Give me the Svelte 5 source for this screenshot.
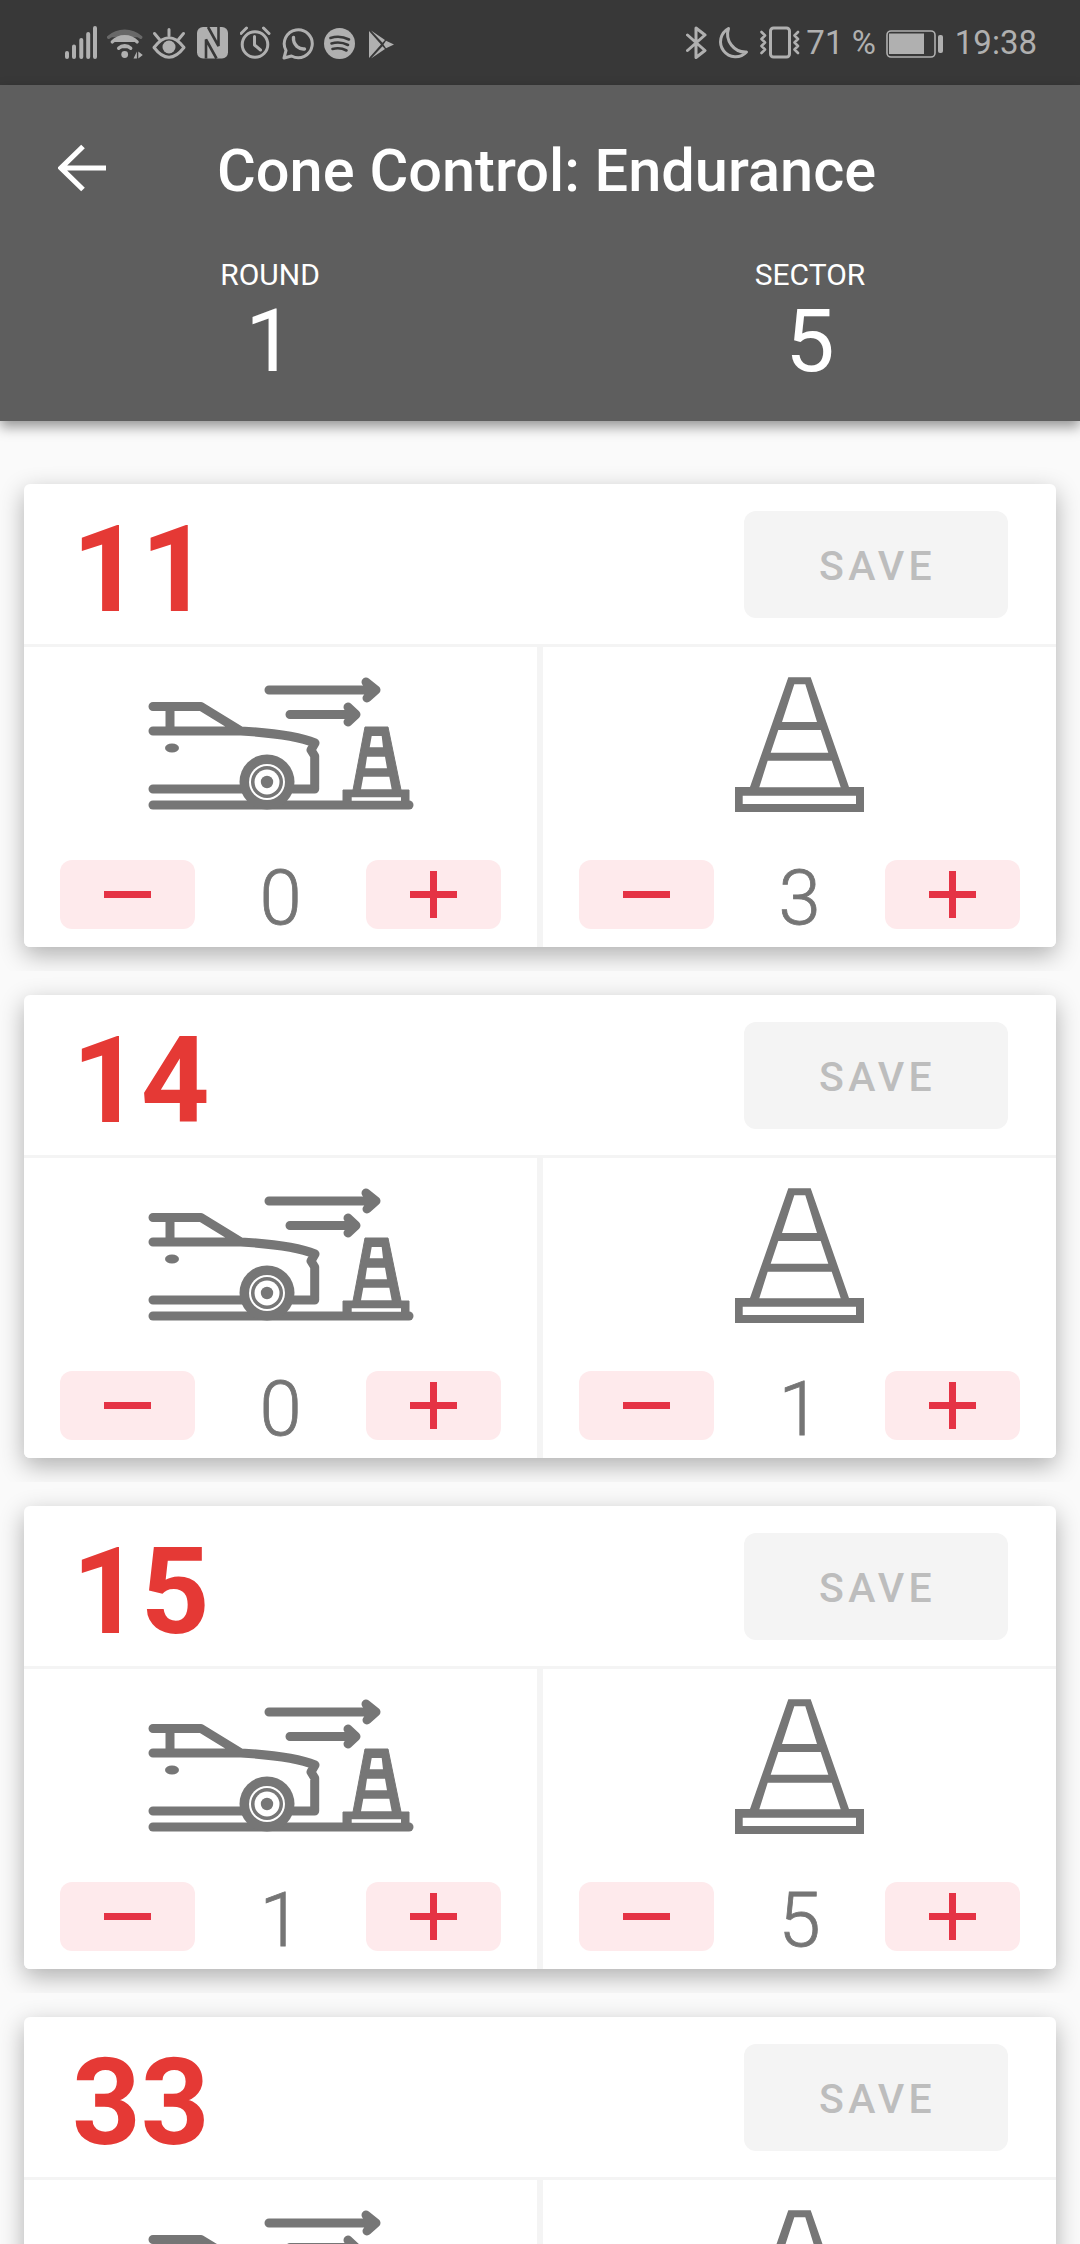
<script>
  const cards = [
    { n: '11', a: 0, b: 3 },
    { n: '14', a: 0, b: 1 },
    { n: '15', a: 1, b: 5 },
    { n: '33', a: null, b: null }
  ];
</script>

{#snippet stepper(value)}
  <div class="stepper">
    <button class="step" aria-label="Decrease">
      <svg width="47" height="7" viewBox="0 0 47 7"><rect width="47" height="7" /></svg>
    </button>
    <span class="value">{value}</span>
    <button class="step" aria-label="Increase">
      <svg width="47" height="47" viewBox="0 0 47 47"><path d="M0 20h20V0h7v20h20v7H27v20h-7V27H0z" /></svg>
    </button>
  </div>
{/snippet}

<div class="app">
  <div class="status">
    <div class="group">
      <svg width="42" height="34" viewBox="0 0 42 34" class="si">
        <path class="ln" stroke-width="4" d="M2 31V27M9 31V20.5M16.3 31V14M23.2 31V8M30 31V2" />
      </svg>
      <svg width="45" height="34" viewBox="0 0 45 34" class="si">
        <path class="ln" stroke-width="3.4" d="M11.7 22.3A8.5 8.5 0 0 1 23.7 22.3M5.3 15.9A17.5 17.5 0 0 1 30.1 15.9" />
        <path class="ln" stroke-width="3.4" opacity=".4" d="M1.7 11.3A24 24 0 0 1 33.7 11.3" />
        <circle cx="17.7" cy="28.5" r="3.4" />
        <path d="M26.5 32.5h3.4v-7zM31.3 25.5v7l4.5-3.5z" />
      </svg>
      <svg width="45" height="34" viewBox="0 0 45 34" class="si">
        <path class="ln" stroke-width="3" fill="none" d="M2 21.5Q17 2 32 21.5Q17 41 2 21.5Z" />
        <circle cx="17" cy="21" r="6.5" />
        <path class="ln" stroke-width="3" d="M17 3.5V9.5M2.5 7.5L7.5 13.5M31.5 7.5L26.5 13.5" />
      </svg>
      <svg width="43" height="34" viewBox="0 0 43 34" class="si">
        <rect x="0" y="1" width="31" height="31.5" rx="6" />
        <path d="M9 32.5V13.5L19.5 32.5M21.5 1V20L11 1" fill="none" stroke="#383838" stroke-width="2.6" />
      </svg>
      <svg width="42" height="34" viewBox="0 0 42 34" class="si">
        <circle cx="15" cy="18.5" r="12.8" fill="none" class="ln" stroke-width="3" />
        <path class="ln" stroke-width="3" fill="none" d="M14.5 10.5V19L20.5 24M1 7.5L6.5 2M29 7.5L23.5 2" />
      </svg>
      <svg width="42" height="34" viewBox="0 0 42 34" class="si">
        <path class="ln" stroke-width="3" fill="none" d="M2 32L4 24.5A14 14 0 1 1 9.5 30Z" />
        <path class="ln" stroke-width="3.4" fill="none" d="M11.5 11.5Q11 16.5 15 20.5Q18.5 23.5 22.5 23" />
      </svg>
      <svg width="44" height="34" viewBox="0 0 44 34" class="si">
        <circle cx="15.5" cy="17.5" r="15.5" />
        <path fill="none" stroke="#383838" stroke-linecap="round" stroke-width="2.6" d="M6.5 12Q16 9 25 13.5M7.5 17.5Q16 15 24 19M8.5 23Q16 21 22.5 24.5" />
      </svg>
      <svg width="26" height="34" viewBox="0 0 26 34" class="si">
        <path d="M1 5L13 18.5L1 32ZM3 4.5L17 14L14.5 16.8ZM3 32.5L14.5 20.2L17 23ZM18 14.8L26 18.5L18 22.2L15.5 18.5Z" />
      </svg>
    </div>
    <div class="group">
      <svg width="31" height="34" viewBox="0 0 31 34" class="si">
        <path class="ln" stroke-width="3" fill="none" stroke-linejoin="miter" d="M1.5 9L19 24.5L10 31.5V2L19 9L1.5 24.5" />
      </svg>
      <svg width="43" height="34" viewBox="0 0 43 34" class="si">
        <path class="ln" stroke-width="3" fill="none" d="M11.5 2.5A15 15 0 1 0 29.5 26A18 18 0 0 1 11.5 2.5Z" />
      </svg>
      <svg width="46" height="34" viewBox="0 0 46 34" class="si">
        <rect x="10.5" y="2" width="19" height="29" rx="3" fill="none" class="ln" stroke-width="3" />
        <path class="ln" stroke-width="2.6" fill="none" d="M1.5 6L5 9.5L1.5 13L5 16.5L1.5 20L5 23.5L1.5 27M38 6L34.5 9.5L38 13L34.5 16.5L38 20L34.5 23.5L38 27" />
      </svg>
      <span class="stxt pct">71 %</span>
      <svg width="57" height="34" viewBox="0 0 57 34" class="si batt">
        <rect x="1" y="5" width="48" height="26" rx="4" fill="none" class="ln" stroke-width="1.6" />
        <rect x="3" y="7.5" width="35" height="20.5" />
        <rect x="52" y="9" width="5" height="18" rx="2" />
      </svg>
      <span class="stxt">19:38</span>
    </div>
  </div>

  <header class="bar">
    <div class="title-row">
      <svg class="back" width="48" height="48" viewBox="0 0 48 48">
        <path d="M48 24H3M25 2.5L3 24L25 45.5" fill="none" stroke="#fff" stroke-width="5.2" />
      </svg>
      <h1>Cone Control: Endurance</h1>
    </div>
    <div class="meta">
      <div class="meta-col"><span class="label">ROUND</span><span class="big">1</span></div>
      <div class="meta-col"><span class="label">SECTOR</span><span class="big">5</span></div>
    </div>
  </header>

  <main class="list">
    {#each cards as c}
      <div class="item">
        <section class="card">
          <div class="card-head">
            <span class="num">{c.n}</span>
            <button class="save">SAVE</button>
          </div>
          <div class="card-body">
            <div class="cell">
              <svg class="pic" width="320" height="170" viewBox="0 0 320 170">
                <g fill="none" stroke="#767676" stroke-width="9" stroke-linecap="round" stroke-linejoin="round">
                  <path d="M148 30H254M245 22L255 30L246 38" />
                  <path d="M169 54.5H234M227 47L235 54.5L227 62" />
                  <path d="M32 46.5H80L120 71M49 46.5V71M32 71H120Q172 74 194 83L190 90L193.7 96V129H172M32 129H122" />
                  <path d="M32 145H288" />
                </g>
                <ellipse cx="51" cy="88" rx="7" ry="4.6" fill="#767676" />
                <circle cx="146" cy="122" r="27.5" fill="#767676" />
                <circle cx="146" cy="122" r="18" fill="#fff" />
                <circle cx="146" cy="122" r="16" fill="#767676" />
                <circle cx="146" cy="122" r="12.5" fill="#fff" />
                <circle cx="146" cy="122" r="6.2" fill="#767676" />
                <path d="M244 67H267L280 130H288V142H222V130H232Z" fill="#767676" stroke="#767676" stroke-width="1" stroke-linejoin="round" />
                <path d="M250.7 76H260.7L262 87.3H248.7ZM246 96.7H264L266 108.3H244.3ZM242.3 116.7H268.3L270.7 129.3H240ZM230.7 137.3H280V140.7H230.7Z" fill="#fff" />
              </svg>
              {#if c.a !== null}{@render stepper(c.a)}{/if}
            </div>
            <div class="cell">
              <svg class="pic" width="200" height="170" viewBox="0 0 200 170">
                <path d="M88.3 17.3H110.7L149 127H164V152H35V127H50ZM94.3 24.3L82 62H117L105.3 24.3ZM78.3 70L70.7 92.7H128.3L120.7 70ZM67.7 100.7L59.3 127.3H140.7L131.7 100.7ZM42.7 135.7V144H156V135.7Z" fill="#767676" fill-rule="evenodd" />
              </svg>
              {#if c.b !== null}{@render stepper(c.b)}{/if}
            </div>
          </div>
        </section>
      </div>
    {/each}
  </main>
</div>

<style>
  :global(body) {
    margin: 0;
    background: #fafafa;
  }
  .app {
    width: 1080px;
    height: 2244px;
    overflow: hidden;
    background: #fafafa;
    font-family: Roboto, "Liberation Sans", sans-serif;
    position: relative;
  }
  .status {
    height: 85px;
    background: #383838;
    display: flex;
    align-items: center;
    justify-content: space-between;
    padding: 0 43px 0 65px;
    box-sizing: border-box;
  }
  .group {
    display: flex;
    align-items: center;
  }
  .si {
    display: block;
    fill: #b0b0b0;
    flex: none;
  }
  .ln {
    stroke: #b0b0b0;
    stroke-linecap: round;
    stroke-linejoin: round;
  }
  .stxt {
    font-size: 33px;
    color: #b0b0b0;
    font-weight: 400;
    line-height: 34px;
    white-space: nowrap;
  }
  .batt {
    margin: 0 12px 0 10px;
  }
  .bar {
    height: 336px;
    background: #5e5e5e;
    color: #fff;
    box-shadow: 0 6px 12px rgba(0, 0, 0, 0.4);
    position: relative;
    z-index: 1;
  }
  .title-row {
    display: flex;
    align-items: center;
    height: 170px;
    padding-left: 58px;
    box-sizing: border-box;
  }
  .back {
    flex: none;
    display: block;
    margin-bottom: 4px;
  }
  h1 {
    margin: 0 0 0 111px;
    padding-top: 2px;
    font-size: 59.5px;
    font-weight: 500;
    line-height: 70px;
    white-space: nowrap;
  }
  .meta {
    display: grid;
    grid-template-columns: 1fr 1fr;
  }
  .meta-col {
    display: flex;
    flex-direction: column;
    align-items: center;
  }
  .label {
    font-size: 30px;
    line-height: 40px;
  }
  .big {
    font-size: 88px;
    line-height: 92px;
    font-weight: 400;
  }
  .list {
    padding-top: 39px;
  }
  .item {
    padding: 24px;
    overflow: hidden;
  }
  .card {
    background: #fff;
    border-radius: 6px;
    height: 463px;
    box-shadow: 0 8px 24px rgba(0, 0, 0, 0.3);
    display: flex;
    flex-direction: column;
    box-sizing: border-box;
  }
  .card-head {
    height: 163px;
    flex: none;
    box-sizing: border-box;
    border-bottom: 3px solid #f4f4f4;
    display: flex;
    align-items: center;
    justify-content: space-between;
    padding: 0 48px;
  }
  .num {
    font-size: 120px;
    font-weight: 700;
    color: #e53935;
    line-height: 140px;
    padding-top: 11px;
  }
  .save {
    width: 264px;
    height: 107px;
    border: 0;
    border-radius: 12px;
    background: #f4f4f4;
    color: #bdbdbd;
    font: 500 41px Roboto, sans-serif;
    letter-spacing: 4.2px;
    padding: 3px 0 0 3px;
  }
  .card-body {
    flex: 1;
    display: grid;
    grid-template-columns: 513px 513px;
    gap: 6px;
    background: #f4f4f4;
    border-radius: 0 0 6px 6px;
    overflow: hidden;
  }
  .cell {
    background: #fff;
    display: flex;
    flex-direction: column;
    align-items: center;
    padding-top: 13px;
  }
  .pic {
    display: block;
    flex: none;
  }
  .stepper {
    margin-top: 30px;
    width: 441px;
    display: flex;
    align-items: center;
    justify-content: space-between;
  }
  .step {
    width: 135px;
    height: 69px;
    padding: 0;
    border: 0;
    border-radius: 12px;
    background: #feeaec;
    display: flex;
    align-items: center;
    justify-content: center;
  }
  .step svg {
    display: block;
    fill: #e53345;
  }
  .value {
    font-size: 76px;
    font-weight: 300;
    -webkit-text-stroke: 0.8px #757575;
    color: #757575;
    height: 69px;
    line-height: 77px;
  }
</style>
